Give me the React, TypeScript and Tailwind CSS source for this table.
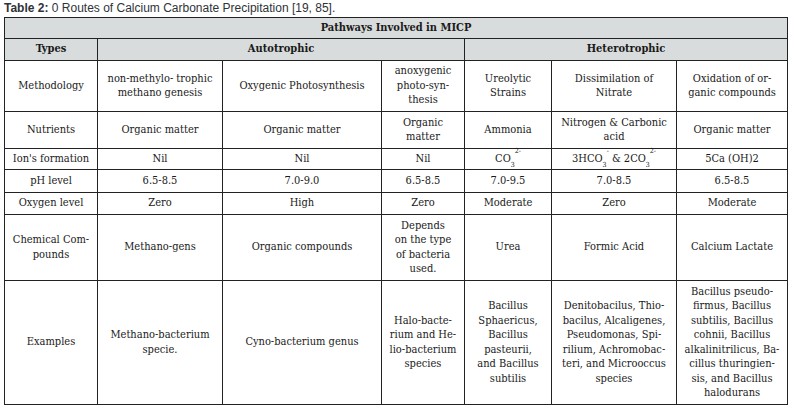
import React from "react";

const serif = '"DejaVu Serif Condensed", "DejaVu Serif", serif';

type Cell = React.ReactNode;

const L = (...lines: string[]) => (
  <>
    {lines.map((l, i) => (
      <React.Fragment key={i}>
        {i > 0 && <br />}
        {l}
      </React.Fragment>
    ))}
  </>
);

const rows: { h: string; cells: Cell[] }[] = [
  {
    h: "h-[51px]",
    cells: [
      "Methodology",
      L("non-methylo- trophic", "methano genesis"),
      "Oxygenic Photosynthesis",
      L("anoxygenic", "photo-syn-", "thesis"),
      L("Ureolytic", "Strains"),
      L("Dissimilation of", "Nitrate"),
      L("Oxidation of or-", "ganic compounds"),
    ],
  },
  {
    h: "h-[37px]",
    cells: [
      "Nutrients",
      "Organic matter",
      "Organic matter",
      L("Organic", "matter"),
      "Ammonia",
      L("Nitrogen & Carbonic", "acid"),
      "Organic matter",
    ],
  },
  {
    h: "h-[21px]",
    cells: [
      "Ion's formation",
      "Nil",
      "Nil",
      "Nil",
      <>
        CO<sub className="text-[7px] align-[-3px]">3</sub>
        <sup className="text-[7px] align-[5px]">2-</sup>
      </>,
      <>
        3HCO<sub className="text-[7px] align-[-3px]">3</sub>
        <sup className="text-[7px] align-[5px]">-</sup> &amp; 2CO
        <sub className="text-[7px] align-[-3px]">3</sub>
        <sup className="text-[7px] align-[5px]">2-</sup>
      </>,
      "5Ca (OH)2",
    ],
  },
  {
    h: "h-[23px]",
    cells: ["pH level", "6.5-8.5", "7.0-9.0", "6.5-8.5", "7.0-9.5", "7.0-8.5", "6.5-8.5"],
  },
  {
    h: "h-[22px]",
    cells: ["Oxygen level", "Zero", "High", "Zero", "Moderate", "Zero", "Moderate"],
  },
  {
    h: "h-[66px]",
    cells: [
      L("Chemical Com-", "pounds"),
      "Methano-gens",
      "Organic compounds",
      L("Depends", "on the type", "of bacteria", "used."),
      "Urea",
      "Formic Acid",
      "Calcium Lactate",
    ],
  },
  {
    h: "h-[124px]",
    cells: [
      "Examples",
      L("Methano-bacterium", "specie."),
      "Cyno-bacterium genus",
      L("Halo-bacte-", "rium and He-", "lio-bacterium", "species"),
      L("Bacillus", "Sphaericus,", "Bacillus", "pasteurii,", "and Bacillus", "subtilis"),
      L(
        "Denitobacilus, Thio-",
        "bacilus, Alcaligenes,",
        "Pseudomonas, Spi-",
        "rilium, Achromobac-",
        "teri, and Microoccus",
        "species"
      ),
      L(
        "Bacillus pseudo-",
        "firmus, Bacillus",
        "subtilis, Bacillus",
        "cohnii, Bacillus",
        "alkalinitrilicus, Ba-",
        "cillus thuringien-",
        "sis, and Bacillus",
        "halodurans"
      ),
    ],
  },
];

const td = "border border-[#222] text-center align-middle px-[2px] py-0 leading-[14.5px]";

export default function App() {
  return (
    <div className="w-[796px] h-[408px] bg-white overflow-hidden">
      <div
        className="h-[17px] pl-[4px] pt-[1px] text-[12px] leading-[14px] text-[#2f3337]"
        style={{ fontFamily: '"Liberation Sans", Arial, sans-serif' }}
      >
        <span className="font-bold">Table 2:</span> 0 Routes of Calcium Carbonate Precipitation [19, 85].
      </div>
      <div className="pl-[4px]">
        <table
          className="border-collapse table-fixed w-[783px] text-[11px] text-[#1a1a1a]"
          style={{ fontFamily: serif }}
        >
          <colgroup>
            <col className="w-[93px]" />
            <col className="w-[125px]" />
            <col className="w-[159px]" />
            <col className="w-[83px]" />
            <col className="w-[87px]" />
            <col className="w-[125px]" />
            <col className="w-[111px]" />
          </colgroup>
          <tbody>
            <tr className="h-[21px] bg-[#d9dcdc]">
              <td colSpan={7} className={`${td} font-bold`}>
                Pathways Involved in MICP
              </td>
            </tr>
            <tr className="h-[22px] bg-[#d9dcdc]">
              <td className={`${td} font-bold`}>Types</td>
              <td colSpan={3} className={`${td} font-bold`}>
                Autotrophic
              </td>
              <td colSpan={3} className={`${td} font-bold`}>
                Heterotrophic
              </td>
            </tr>
            {rows.map((r, i) => (
              <tr key={i} className={r.h}>
                {r.cells.map((c, j) => (
                  <td key={j} className={td}>
                    {c}
                  </td>
                ))}
              </tr>
            ))}
          </tbody>
        </table>
      </div>
    </div>
  );
}
